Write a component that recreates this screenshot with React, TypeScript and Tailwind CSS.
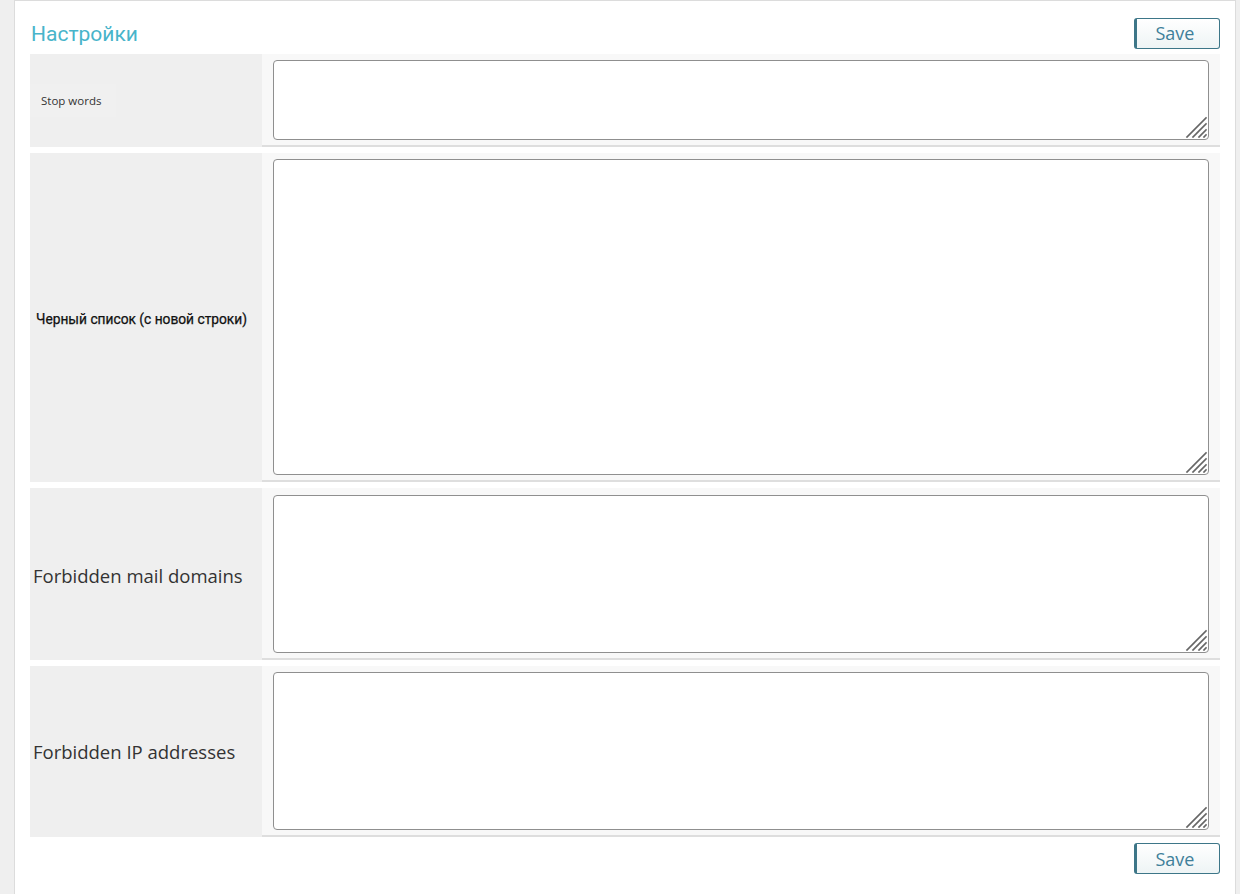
import React from "react";

const SaveButton = () => (
  <button
    type="button"
    className="w-[86px] h-[31px] rounded-[3px] border border-[#3d7688] border-l-[3px] bg-gradient-to-b from-white to-[#eef4f5] text-[18px] text-[#3f7f9a] leading-none pr-[6px]"
    style={{ fontFamily: '"Open Sans", sans-serif' }}
  >
    Save
  </button>
);

type RowProps = {
  label: React.ReactNode;
  height: number;
  pt?: string;
};

const Grip = () => (
  <svg
    className="absolute right-[2px] bottom-[2px] pointer-events-none"
    width="22"
    height="22"
    viewBox="0 0 22 22"
  >
    <g stroke="#666" strokeWidth="1.7" strokeLinecap="square">
      <line x1="21" y1="2" x2="2" y2="21" />
      <line x1="21" y1="8" x2="8" y2="21" />
      <line x1="21" y1="14" x2="14" y2="21" />
      <line x1="21" y1="19" x2="19" y2="21" />
    </g>
  </svg>
);

const Row = ({ label, height, pt = "pt-[6px]" }: RowProps) => (
  <div className="flex">
    <div className="w-[232px] shrink-0 bg-[#efefef] flex items-center">{label}</div>
    <div className={`flex-1 bg-[#f8f8f8] border-b-2 border-[#dedede] pl-[11px] pr-[11px] pb-[5px] ${pt}`}>
      <div className="relative">
        <textarea
          className="block w-full rounded-[4px] border border-[#8f8f8f] bg-white outline-none resize-none"
          style={{ height }}
        />
        <Grip />
      </div>
    </div>
  </div>
);

export default function App() {
  return (
    <div className="min-h-[894px] bg-[#efefef] pl-[14px] pr-[4px]">
      <div className="min-h-[894px] bg-white border-x border-t border-[#dcdcdc] px-[15px] pt-[16px] pb-[19px]">
        <div className="flex items-center justify-between h-[33px] pb-[1px]">
          <h1
            className="text-[21px] text-[#48b4ca] leading-none pt-[2px] pl-[1px]"
            style={{ fontFamily: "Roboto, sans-serif" }}
          >
            Настройки
          </h1>
          <SaveButton />
        </div>
        <div className="mt-[4px] flex flex-col gap-[6px]">
          <Row
            height={80}
            label={
              <span
                className="text-[11.5px] text-[#333] bg-[#f0f0f0] pl-[11px] pr-[15px] py-[8px]"
                style={{ fontFamily: '"Open Sans", sans-serif' }}
              >
                Stop words
              </span>
            }
          />
          <Row
            height={316}
            label={
              <span
                className="text-[13.75px] font-normal text-[#111] pl-[6px] pt-[4px]"
                style={{ fontFamily: "Roboto, sans-serif", WebkitTextStroke: "0.25px #111" }}
              >
                Черный список (с новой строки)
              </span>
            }
          />
          <Row
            height={158}
            pt="pt-[7px]"
            label={
              <span
                className="text-[18.5px] text-[#333] pl-[3px] pt-[4px]"
                style={{ fontFamily: '"Open Sans", sans-serif' }}
              >
                Forbidden mail domains
              </span>
            }
          />
          <Row
            height={158}
            pt="pt-[6px]"
            label={
              <span
                className="text-[18.5px] text-[#333] pl-[3px]"
                style={{ fontFamily: '"Open Sans", sans-serif' }}
              >
                Forbidden IP addresses
              </span>
            }
          />
        </div>
        <div className="flex justify-end mt-[6px]">
          <SaveButton />
        </div>
      </div>
    </div>
  );
}
